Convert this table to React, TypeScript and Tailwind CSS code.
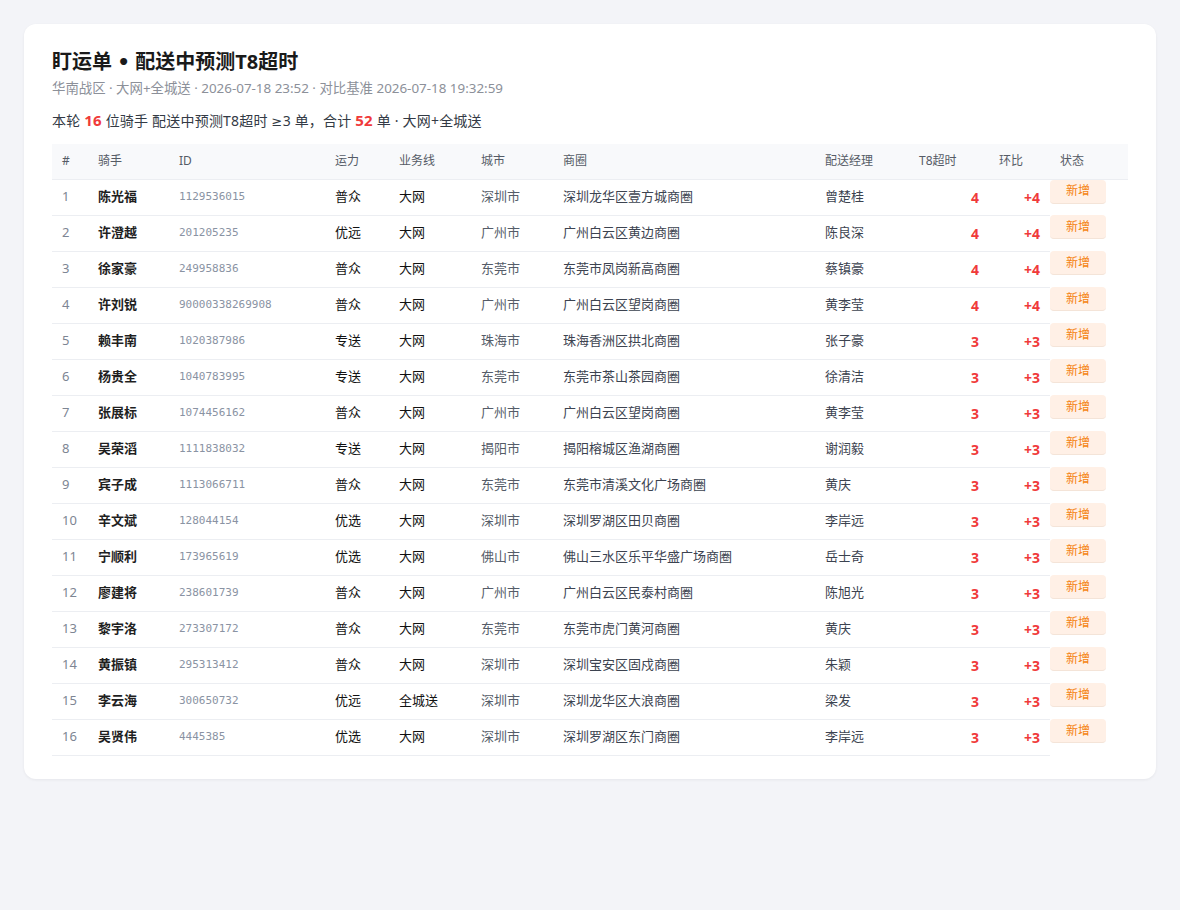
import React from "react";

type Row = {
  name: string;
  id: string;
  cap: string;
  line: string;
  city: string;
  zone: string;
  mgr: string;
  t8: number;
};

const rows: Row[] = [
  { name: "陈光福", id: "1129536015", cap: "普众", line: "大网", city: "深圳市", zone: "深圳龙华区壹方城商圈", mgr: "曾楚桂", t8: 4 },
  { name: "许澄越", id: "201205235", cap: "优远", line: "大网", city: "广州市", zone: "广州白云区黄边商圈", mgr: "陈良深", t8: 4 },
  { name: "徐家豪", id: "249958836", cap: "普众", line: "大网", city: "东莞市", zone: "东莞市凤岗新高商圈", mgr: "蔡镇豪", t8: 4 },
  { name: "许刘锐", id: "90000338269908", cap: "普众", line: "大网", city: "广州市", zone: "广州白云区望岗商圈", mgr: "黄李莹", t8: 4 },
  { name: "赖丰南", id: "1020387986", cap: "专送", line: "大网", city: "珠海市", zone: "珠海香洲区拱北商圈", mgr: "张子豪", t8: 3 },
  { name: "杨贵全", id: "1040783995", cap: "专送", line: "大网", city: "东莞市", zone: "东莞市茶山茶园商圈", mgr: "徐清洁", t8: 3 },
  { name: "张展标", id: "1074456162", cap: "普众", line: "大网", city: "广州市", zone: "广州白云区望岗商圈", mgr: "黄李莹", t8: 3 },
  { name: "吴荣滔", id: "1111838032", cap: "专送", line: "大网", city: "揭阳市", zone: "揭阳榕城区渔湖商圈", mgr: "谢润毅", t8: 3 },
  { name: "宾子成", id: "1113066711", cap: "普众", line: "大网", city: "东莞市", zone: "东莞市清溪文化广场商圈", mgr: "黄庆", t8: 3 },
  { name: "辛文斌", id: "128044154", cap: "优选", line: "大网", city: "深圳市", zone: "深圳罗湖区田贝商圈", mgr: "李岸远", t8: 3 },
  { name: "宁顺利", id: "173965619", cap: "优选", line: "大网", city: "佛山市", zone: "佛山三水区乐平华盛广场商圈", mgr: "岳士奇", t8: 3 },
  { name: "廖建将", id: "238601739", cap: "普众", line: "大网", city: "广州市", zone: "广州白云区民泰村商圈", mgr: "陈旭光", t8: 3 },
  { name: "黎宇洛", id: "273307172", cap: "普众", line: "大网", city: "东莞市", zone: "东莞市虎门黄河商圈", mgr: "黄庆", t8: 3 },
  { name: "黄振镇", id: "295313412", cap: "普众", line: "大网", city: "深圳市", zone: "深圳宝安区固戍商圈", mgr: "朱颖", t8: 3 },
  { name: "李云海", id: "300650732", cap: "优远", line: "全城送", city: "深圳市", zone: "深圳龙华区大浪商圈", mgr: "梁发", t8: 3 },
  { name: "吴贤伟", id: "4445385", cap: "优选", line: "大网", city: "深圳市", zone: "深圳罗湖区东门商圈", mgr: "李岸远", t8: 3 },
];

const headers = ["#", "骑手", "ID", "运力", "业务线", "城市", "商圈", "配送经理", "T8超时", "环比", "状态"];
const widths = [36, 81, 156, 64, 82, 82, 262, 94, 80, 61, 78];

export default function App() {
  return (
    <div
      className="min-h-[910px] bg-[#f3f4f8] p-6"
      style={{ fontFamily: '"Noto Sans", "Noto Sans CJK SC", sans-serif' }}
    >
      <div className="rounded-xl bg-white px-7 pt-6 pb-[23px] shadow-[0_1px_3px_rgba(15,23,42,0.06)]">
        {/* Header */}
        <h1 className="text-[20px] font-bold leading-[27px] text-[#1a1a1a]">
          盯运单 <span className="font-['DejaVu_Sans']">•</span> 配送中预测T8超时
        </h1>
        <div className="mt-[3px] text-[13.4px] leading-[18px] text-[#8c9099]">
          华南战区 · 大网+全城送 · 2026-07-18 23:52 · 对比基准 2026-07-18 19:32:59
        </div>
        <div className="mt-[13px] text-[14px] leading-5 tracking-[0.2px] text-[#333a45]">
          本轮 <span className="text-[15px] font-bold text-[#f03a3a]">16</span> 位骑手 配送中预测T8超时{" "}
          <span className="font-['DejaVu_Sans'] text-[13px]">≥</span>3 单，合计{" "}
          <span className="text-[15px] font-bold text-[#f03a3a]">52</span> 单 · 大网+全城送
        </div>

        {/* Table */}
        <table className="mt-3 w-full table-fixed border-collapse text-[13px]">
          <colgroup>
            {widths.map((w, i) => (
              <col key={i} style={{ width: w }} />
            ))}
          </colgroup>
          <thead>
            <tr className="h-[35px] border-b border-[#eceef2] bg-[#f8f9fb]">
              {headers.map((h) => (
                <th key={h} className="px-[10px] text-left text-[12px] font-normal text-[#555b66]">
                  {h}
                </th>
              ))}
            </tr>
          </thead>
          <tbody>
            {rows.map((r, i) => (
              <tr key={r.id} className="h-[36px]">
                <td className="border-b border-[#eceef2] px-[10px] text-[#7d8593]">{i + 1}</td>
                <td className="border-b border-[#eceef2] px-[10px] font-bold text-[#1f1f1f]">{r.name}</td>
                <td className="border-b border-[#eceef2] px-[10px] font-['DejaVu_Sans_Mono'] text-[11px] text-[#8a93a3]">
                  {r.id}
                </td>
                <td className="border-b border-[#eceef2] px-[10px] text-[#111]">{r.cap}</td>
                <td className="border-b border-[#eceef2] px-[10px] text-[#111]">{r.line}</td>
                <td className="border-b border-[#eceef2] px-[10px] text-[#555c68]">{r.city}</td>
                <td className="border-b border-[#eceef2] px-[10px] text-[#3c4350]">{r.zone}</td>
                <td className="border-b border-[#eceef2] px-[10px] text-[#3c4350]">{r.mgr}</td>
                <td className="border-b border-[#eceef2] px-[10px] text-right text-[14px] font-bold text-[#f03a3a]">{r.t8}</td>
                <td className="border-b border-[#eceef2] px-[10px] text-right text-[14px] font-bold text-[#f03a3a]">+{r.t8}</td>
                <td className="p-0 align-top">
                  <div className="flex h-6 w-14 items-center justify-center rounded border-b border-[#f4e4d8] bg-[#fff0e6] text-[12px] text-[#f5820f]">
                    新增
                  </div>
                </td>
              </tr>
            ))}
          </tbody>
        </table>
      </div>
    </div>
  );
}
